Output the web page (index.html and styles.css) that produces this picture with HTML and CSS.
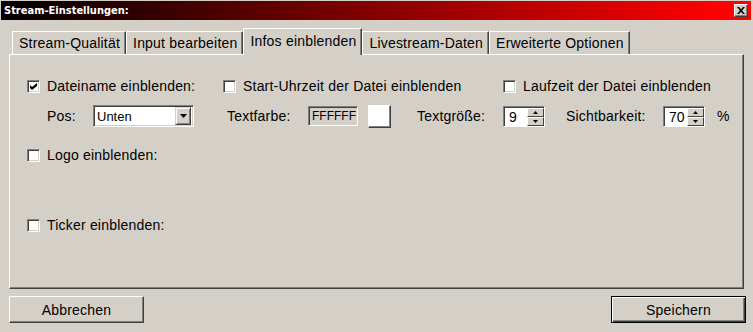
FILE: index.html
```html
<!DOCTYPE html>
<html lang="de">
<head>
    <meta charset="UTF-8"/>
    <meta name="viewport" content="width=device-width, initial-scale=1.0"/>
    <title>Stream-Einstellungen</title>
    <link rel="stylesheet" href="styles.css">
</head>
<body>
<div class="window">
    <div class="titlebar">
        <span class="title">Stream-Einstellungen:</span>
        <button class="close" title="Schließen">
            <svg width="8" height="7" viewBox="0 0 8 7">
                <path d="M0 0h2l2 2.2L6 0h2L5 3.5 8 7H6L4 4.8 2 7H0l3-3.5z" fill="#000"/>
            </svg>
        </button>
    </div>

    <div class="tabs">
        <div class="tab">Stream-Qualität</div>
        <div class="tab">Input bearbeiten</div>
        <div class="tab active">Infos einblenden</div>
        <div class="tab">Livestream-Daten</div>
        <div class="tab">Erweiterte Optionen</div>
    </div>

    <div class="panel">
        <div class="row row-checks">
            <label class="check col-a">
                <span class="box">
                    <svg width="7" height="7" viewBox="0 0 7 7">
                        <path d="M0 2l2 2 5-4v3L2 7 0 5z" fill="#000"/>
                    </svg>
                </span>
                Dateiname einblenden:
            </label>
            <label class="check col-b"><span class="box"></span>Start-Uhrzeit der Datei einblenden</label>
            <label class="check"><span class="box"></span>Laufzeit der Datei einblenden</label>
        </div>

        <div class="row row-options">
            <span class="lbl lbl-pos">Pos:</span>
            <div class="select">
                <span class="select-value">Unten</span>
                <span class="drop">
                    <svg width="7" height="4" viewBox="0 0 7 4"><path d="M0 0h7L3.5 4z" fill="#000"/></svg>
                </span>
            </div>

            <span class="lbl lbl-color">Textfarbe:</span>
            <div class="field hex">FFFFFF</div>
            <button class="swatch"></button>

            <span class="lbl lbl-size">Textgröße:</span>
            <div class="spin">
                <span class="spin-value">9</span>
                <span class="spin-btns">
                    <span class="spin-btn"><svg width="5" height="3" viewBox="0 0 5 3"><path d="M2.5 0L5 3H0z" fill="#000"/></svg></span>
                    <span class="spin-btn"><svg width="5" height="3" viewBox="0 0 5 3"><path d="M0 0h5L2.5 3z" fill="#000"/></svg></span>
                </span>
            </div>

            <span class="lbl lbl-vis">Sichtbarkeit:</span>
            <div class="spin">
                <span class="spin-value">70</span>
                <span class="spin-btns">
                    <span class="spin-btn"><svg width="5" height="3" viewBox="0 0 5 3"><path d="M2.5 0L5 3H0z" fill="#000"/></svg></span>
                    <span class="spin-btn"><svg width="5" height="3" viewBox="0 0 5 3"><path d="M0 0h5L2.5 3z" fill="#000"/></svg></span>
                </span>
            </div>
            <span class="lbl lbl-pct">%</span>
        </div>

        <div class="row row-logo">
            <label class="check"><span class="box"></span>Logo einblenden:</label>
        </div>

        <div class="row row-ticker">
            <label class="check"><span class="box"></span>Ticker einblenden:</label>
        </div>
    </div>

    <div class="footer">
        <button class="btn">Abbrechen</button>
        <button class="btn default">Speichern</button>
    </div>
</div>
</body>
</html>
```

FILE: styles.css
```css
* {
    margin: 0;
    padding: 0;
    box-sizing: border-box;
}

body {
    width: 753px;
    height: 332px;
    overflow: hidden;
    background-color: #d4d0c8;
    font-family: 'Liberation Sans', Arial, sans-serif;
    font-size: 14px;
    letter-spacing: 0.2px;
    color: #000;
}

.window {
    width: 753px;
    height: 332px;
    padding: 1px 2px 0 1px;
}

/* title bar */
.titlebar {
    height: 19px;
    display: flex;
    align-items: center;
    justify-content: space-between;
    padding: 0 3px 0 3px;
    background: linear-gradient(90deg, #000 0%, #ff0000 96%, #ff0000 100%);
}

.title {
    color: #fff;
    font-family: 'DejaVu Sans Condensed', 'DejaVu Sans', Tahoma, sans-serif;
    font-weight: bold;
    font-size: 11px;
    letter-spacing: 0;
}

.close {
    width: 14px;
    height: 13px;
    display: flex;
    align-items: center;
    justify-content: center;
    background-color: #d4d0c8;
    border: 1px solid;
    border-color: #fff #404040 #404040 #fff;
    box-shadow: inset -1px -1px 0 #808080;
}

/* tabs */
.tabs {
    display: flex;
    align-items: flex-end;
    height: 34px;
    padding-left: 11px;
}

.tab {
    height: 23px;
    padding: 0 5px 0 6px;
    display: flex;
    align-items: center;
    background-color: #d4d0c8;
    border-top: 1px solid #fff;
    border-left: 1px solid #fff;
    border-right: 1px solid #404040;
    box-shadow: inset -1px 0 0 #808080;
    white-space: nowrap;
}

.tab.active {
    height: 27px;
    margin-bottom: -1px;
    position: relative;
    z-index: 1;
    padding-bottom: 2px;
}

/* panel */
.panel {
    margin-left: 8px;
    width: 735px;
    height: 235px;
    border-top: 1px solid #fff;
    border-left: 1px solid #fff;
    border-right: 1px solid #404040;
    border-bottom: 1px solid #404040;
    box-shadow: inset -1px -1px 0 #808080;
    padding-top: 20px;
}

.row {
    display: flex;
    align-items: center;
}

.row-checks {
    height: 22px;
    padding-left: 17px;
}

.row-options {
    height: 24px;
    margin-top: 7px;
    padding-left: 37px;
}

.row-logo {
    height: 22px;
    margin-top: 16px;
    padding-left: 17px;
}

.row-ticker {
    height: 22px;
    margin-top: 48px;
    padding-left: 17px;
}

.check {
    display: flex;
    align-items: center;
    gap: 7px;
    white-space: nowrap;
}

.col-a {
    width: 196px;
}

.col-b {
    width: 280px;
}

.box {
    width: 13px;
    height: 13px;
    display: flex;
    align-items: center;
    justify-content: center;
    background-color: #fff;
    border: 1px solid;
    border-color: #808080 #fff #fff #808080;
    box-shadow: inset 1px 1px 0 #404040, inset -1px -1px 0 #d4d0c8;
}

/* second row controls */
.lbl {
    white-space: nowrap;
}

.lbl-pos {
    width: 46px;
}

.lbl-color {
    width: 81px;
    margin-left: 33px;
}

.lbl-size {
    width: 86px;
    margin-left: 26px;
}

.lbl-vis {
    width: 97px;
    margin-left: 21px;
}

.lbl-pct {
    margin-left: 12px;
}

.select {
    width: 101px;
    height: 22px;
    display: flex;
    align-items: center;
    justify-content: space-between;
    background-color: #fff;
    border: 1px solid;
    border-color: #808080 #fff #fff #808080;
    box-shadow: inset 1px 1px 0 #404040, inset -1px -1px 0 #d4d0c8;
    padding: 2px;
}

.select-value {
    font-size: 13px;
    letter-spacing: 0;
    padding-left: 1px;
}

.drop {
    width: 16px;
    height: 18px;
    display: flex;
    align-items: center;
    justify-content: center;
    background-color: #d4d0c8;
    border: 1px solid;
    border-color: #d4d0c8 #404040 #404040 #d4d0c8;
    box-shadow: inset 1px 1px 0 #fff, inset -1px -1px 0 #808080;
}

.field {
    height: 20px;
    display: flex;
    align-items: center;
    border: 1px solid;
    border-color: #808080 #fff #fff #808080;
    box-shadow: inset 1px 1px 0 #404040;
}

.hex {
    width: 50px;
    padding-left: 3px;
    font-size: 12px;
    letter-spacing: 0;
    background-color: #d4d0c8;
}

.swatch {
    width: 23px;
    height: 23px;
    margin-left: 10px;
    background-color: #fff;
    border: 1px solid;
    border-color: #fff #404040 #404040 #fff;
    box-shadow: inset -1px -1px 0 #808080;
}

.spin {
    width: 42px;
    height: 21px;
    display: flex;
    background-color: #fff;
    border: 1px solid;
    border-color: #808080 #fff #fff #808080;
    box-shadow: inset 1px 1px 0 #404040;
    padding: 1px 0 0 1px;
}

.spin-value {
    flex: 1;
    display: flex;
    align-items: center;
    padding-left: 4px;
    padding-top: 1px;
    letter-spacing: 0;
}

.spin-btns {
    width: 17px;
    display: flex;
    flex-direction: column;
}

.spin-btn {
    flex: 1;
    display: flex;
    align-items: center;
    justify-content: center;
    background-color: #d4d0c8;
    border: 1px solid;
    border-color: #fff #404040 #404040 #fff;
}

/* footer */
.footer {
    display: flex;
    justify-content: space-between;
    margin-top: 7px;
    padding-left: 8px;
    padding-right: 5px;
}

.btn {
    width: 135px;
    height: 27px;
    font-family: 'Liberation Sans', Arial, sans-serif;
    font-size: 14px;
    letter-spacing: 0.2px;
    color: #000;
    background-color: #d4d0c8;
    border: 1px solid;
    border-color: #fff #404040 #404040 #fff;
    box-shadow: inset -1px -1px 0 #808080;
}

.btn.default {
    border: 1px solid #000;
    box-shadow: inset 1px 1px 0 #fff, inset -1px -1px 0 #404040, inset -2px -2px 0 #808080;
}
```
